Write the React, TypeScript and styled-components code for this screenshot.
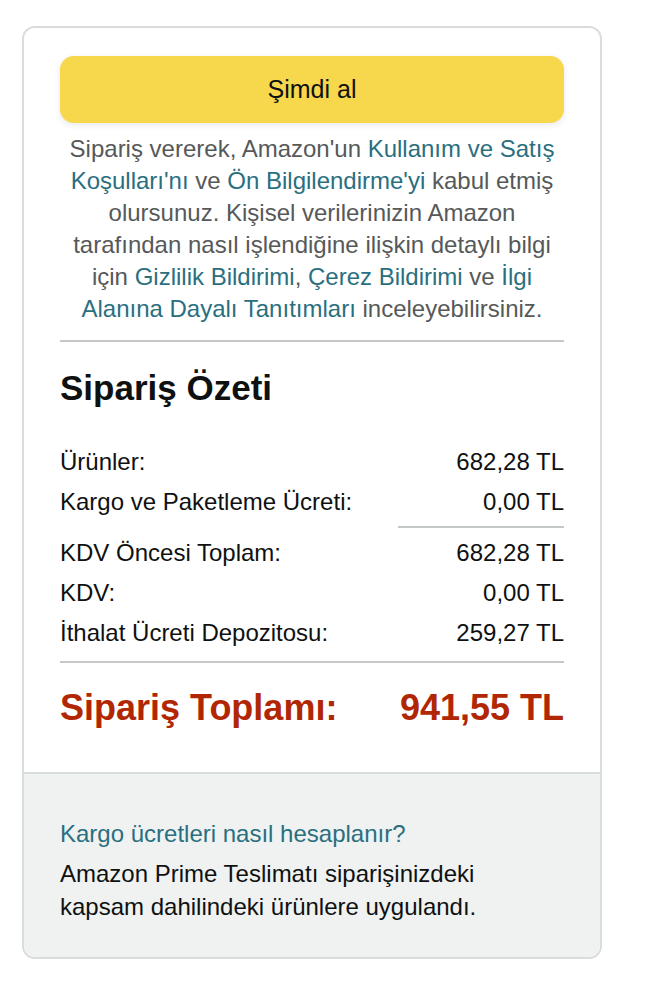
import React from "react";
import styled, { createGlobalStyle } from "styled-components";

const GlobalStyle = createGlobalStyle`
  html, body {
    margin: 0;
    padding: 0;
    background: #ffffff;
  }
  body {
    font-family: "Liberation Sans", Arial, sans-serif;
    color: #0f1111;
  }
`;

const Page = styled.div`
  padding: 26px 0 0 22px;
`;

const Card = styled.div`
  width: 580px;
  box-sizing: border-box;
  border: 2px solid #d9dcdc;
  border-radius: 13px;
  overflow: hidden;
  background: #ffffff;
`;

const Main = styled.div`
  padding: 28px 36px 42px;
  display: flex;
  flex-direction: column;
`;

const BuyButton = styled.button`
  height: 67px;
  width: 100%;
  border: none;
  border-radius: 14px;
  background: #f7d74b;
  box-shadow: 0 2px 6px rgba(213, 217, 217, 0.6);
  font-family: inherit;
  font-size: 25px;
  color: #0f1111;
  cursor: pointer;
`;

const Legal = styled.p`
  margin: 10px 0 0;
  text-align: center;
  font-size: 24px;
  line-height: 32px;
  color: #565959;
`;

const Link = styled.a`
  color: #2a6f80;
  text-decoration: none;
`;

const Rule = styled.hr<{ $short?: boolean; $gapTop: number; $gapBottom: number }>`
  border: none;
  height: 2px;
  background: #c4c8c8;
  margin: ${(p) => p.$gapTop}px 0 ${(p) => p.$gapBottom}px ${(p) => (p.$short ? "auto" : "0")};
  width: ${(p) => (p.$short ? "166px" : "100%")};
`;

const Title = styled.h2`
  margin: 0 0 36px;
  font-size: 35px;
  line-height: 44px;
  font-weight: 700;
  color: #0f1111;
`;

const Row = styled.div<{ $total?: boolean }>`
  display: flex;
  justify-content: space-between;
  align-items: baseline;
  font-size: ${(p) => (p.$total ? "36px" : "24px")};
  line-height: ${(p) => (p.$total ? "44px" : "32px")};
  font-weight: ${(p) => (p.$total ? 700 : 400)};
  color: ${(p) => (p.$total ? "#b12704" : "#0f1111")};
  & + & {
    margin-top: 8px;
  }
`;

const Footer = styled.div`
  background: #f0f2f2;
  border-top: 2px solid #d9dcdc;
  padding: 44px 36px 34px;
`;

const FooterLink = styled.a`
  display: block;
  font-size: 24px;
  line-height: 32px;
  color: #2a6f80;
  text-decoration: none;
`;

const FooterText = styled.p`
  margin: 7px 0 0;
  font-size: 24px;
  line-height: 33px;
  color: #0f1111;
`;

const summaryTop = [
  ["Ürünler:", "682,28 TL"],
  ["Kargo ve Paketleme Ücreti:", "0,00 TL"],
];

const summaryBottom = [
  ["KDV Öncesi Toplam:", "682,28 TL"],
  ["KDV:", "0,00 TL"],
  ["İthalat Ücreti Depozitosu:", "259,27 TL"],
];

export default function App() {
  return (
    <>
      <GlobalStyle />
      <Page>
        <Card>
          <Main>
            <BuyButton>Şimdi al</BuyButton>
            <Legal>
              Sipariş vererek, Amazon'un <Link href="#">Kullanım ve Satış Koşulları'nı</Link> ve{" "}
              <Link href="#">Ön Bilgilendirme'yi</Link> kabul etmiş olursunuz. Kişisel verilerinizin
              Amazon tarafından nasıl işlendiğine ilişkin detaylı bilgi için{" "}
              <Link href="#">Gizlilik Bildirimi</Link>, <Link href="#">Çerez Bildirimi</Link> ve{" "}
              <Link href="#">İlgi Alanına Dayalı Tanıtımları</Link> inceleyebilirsiniz.
            </Legal>
            <Rule $gapTop={15} $gapBottom={24} />
            <Title>Sipariş Özeti</Title>
            <div>
              {summaryTop.map(([label, value]) => (
                <Row key={label}>
                  <span>{label}</span>
                  <span>{value}</span>
                </Row>
              ))}
            </div>
            <Rule $short $gapTop={8} $gapBottom={9} />
            <div>
              {summaryBottom.map(([label, value]) => (
                <Row key={label}>
                  <span>{label}</span>
                  <span>{value}</span>
                </Row>
              ))}
            </div>
            <Rule $gapTop={12} $gapBottom={23} />
            <Row $total>
              <span>Sipariş Toplamı:</span>
              <span>941,55 TL</span>
            </Row>
          </Main>
          <Footer>
            <FooterLink href="#">Kargo ücretleri nasıl hesaplanır?</FooterLink>
            <FooterText>
              Amazon Prime Teslimatı siparişinizdeki
              <br />
              kapsam dahilindeki ürünlere uygulandı.
            </FooterText>
          </Footer>
        </Card>
      </Page>
    </>
  );
}
